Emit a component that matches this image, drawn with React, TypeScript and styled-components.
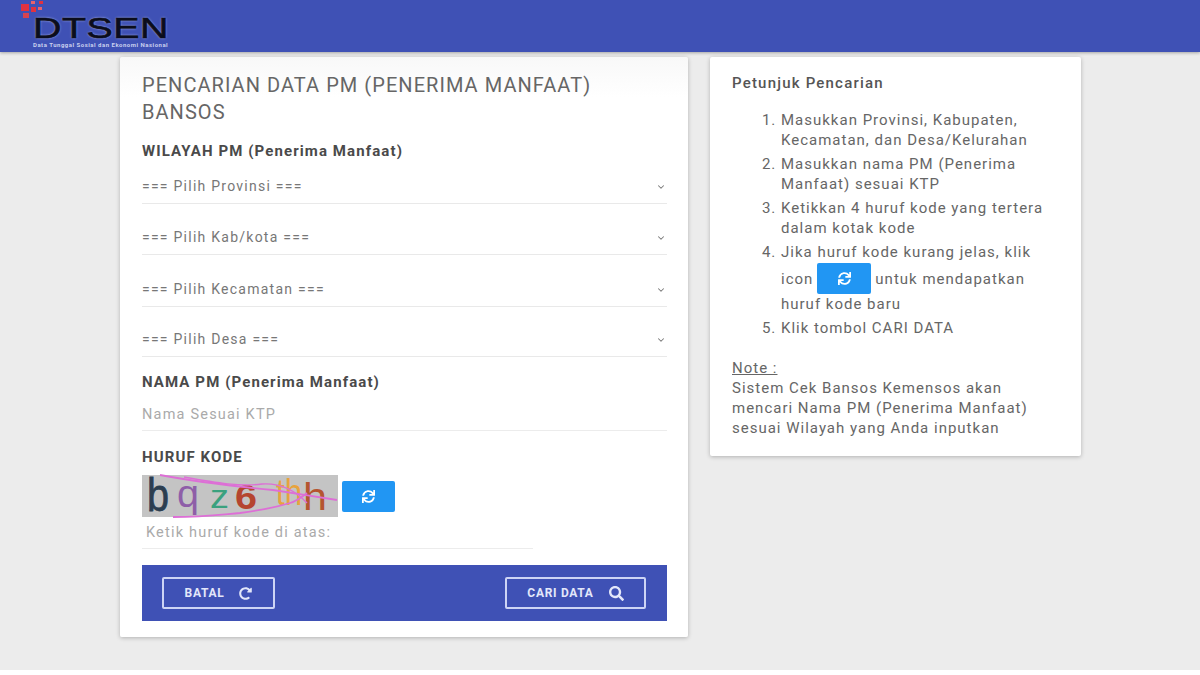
import styled, { createGlobalStyle } from "styled-components";
import { ChevronDown } from "lucide-react";
import { FaRedoAlt, FaSearch, FaSync } from "react-icons/fa";

const GlobalStyle = createGlobalStyle`
  html, body {
    margin: 0;
    background: #fff;
    font-family: Roboto, "Liberation Sans", sans-serif;
  }
`;

const Page = styled.div`
  width: 1200px;
  height: 670px;
  background: #ececec;
  overflow: hidden;
`;

const Header = styled.header`
  height: 52px;
  background: #3f51b5;
  box-shadow: 0 1px 3px rgba(0, 0, 0, 0.3);
  padding-left: 20px;
  box-sizing: border-box;
`;

const Logo = styled.div`
  position: relative;
  width: 150px;
  height: 52px;
`;

const LogoMark = styled.svg`
  position: absolute;
  left: 0;
  top: 0;
`;

const LogoName = styled.div`
  position: absolute;
  left: 13px;
  top: 16px;
  font-family: "Liberation Sans", sans-serif;
  font-size: 30px;
  line-height: 24px;
  letter-spacing: 0.4px;
  color: #0b0d1c;
  -webkit-text-stroke: 0.7px #0b0d1c;
  text-shadow: 0 0 2px #cfd6f5;
  transform: scaleX(1.31);
  transform-origin: left center;
`;

const LogoTagline = styled.div`
  position: absolute;
  left: 13px;
  top: 41px;
  font-size: 6px;
  line-height: 7px;
  font-weight: 700;
  letter-spacing: 0.5px;
  color: #c9d0ee;
  white-space: nowrap;
`;

const Content = styled.main`
  display: flex;
  align-items: flex-start;
  gap: 22px;
  padding: 5px 0 0 120px;
`;

const Card = styled.section`
  background: #fff;
  box-shadow: 0 1px 4px rgba(0, 0, 0, 0.25);
  border-radius: 2px;
  box-sizing: border-box;
`;

const FormCard = styled(Card)`
  width: 568px;
  height: 580px;
  padding: 15px 21px 0 22px;
  background: linear-gradient(#f8f8f8, #fff 40px);
`;

const HelpCard = styled(Card)`
  width: 371px;
  height: 399px;
  padding: 16px 22px 0;
  font-size: 15px;
  letter-spacing: 1px;
  color: #666;
`;

const Title = styled.h1`
  margin: 0 0 16px;
  font-size: 20px;
  line-height: 27px;
  font-weight: 400;
  letter-spacing: 1.05px;
  color: #666;
`;

const Label = styled.div<{ $bottom: number }>`
  font-size: 15px;
  line-height: 18px;
  font-weight: 700;
  letter-spacing: 1.1px;
  color: #4a4a4a;
  margin-bottom: ${(p) => p.$bottom}px;
`;

const SelectRow = styled.div<{ $height: number }>`
  height: ${(p) => p.$height}px;
  display: flex;
  align-items: flex-end;
  justify-content: space-between;
  border-bottom: 1px solid #e9e9e9;
  box-sizing: border-box;
  padding: 0 1px 8px 0;
  font-size: 14px;
  line-height: 18px;
  letter-spacing: 1.25px;
  color: #777;
`;

const SelectChevron = styled(ChevronDown)`
  color: #777;
  margin-bottom: 3px;
`;

const SelectList = styled.div`
  margin-bottom: 16px;
`;

const TextField = styled.div<{ $width?: number; $indent?: number; $bottom: number }>`
  width: ${(p) => (p.$width ? `${p.$width}px` : "auto")};
  height: 32px;
  padding-left: ${(p) => p.$indent ?? 0}px;
  margin-bottom: ${(p) => p.$bottom}px;
  display: flex;
  align-items: center;
  border-bottom: 1px solid #ececec;
  box-sizing: border-box;
  font-size: 14.5px;
  letter-spacing: 1.2px;
  color: #aaa;
`;

const CaptchaRow = styled.div`
  display: flex;
  align-items: center;
  gap: 4px;
`;

const Captcha = styled.svg`
  display: block;
  width: 196px;
  height: 42px;
  background: #c4c4c4;
  overflow: visible;
`;

const RefreshButton = styled.span<{ $width: number; $height: number }>`
  display: inline-flex;
  align-items: center;
  justify-content: center;
  flex-shrink: 0;
  width: ${(p) => p.$width}px;
  height: ${(p) => p.$height}px;
  background: #2196f3;
  border-radius: 2px;
  color: #fff;
`;

const ActionBar = styled.div`
  height: 56px;
  background: #3f51b5;
  display: flex;
  align-items: center;
  justify-content: space-between;
  padding: 0 21px 0 20px;
  box-sizing: border-box;
`;

const ActionButton = styled.button<{ $width: number }>`
  width: ${(p) => p.$width}px;
  height: 32px;
  padding: 0;
  display: flex;
  align-items: center;
  justify-content: center;
  gap: 15px;
  background: transparent;
  border: 2px solid #cdd4f5;
  border-radius: 2px;
  box-sizing: border-box;
  color: #e3e7fa;
  font-family: inherit;
  font-size: 12px;
  font-weight: 700;
  letter-spacing: 0.7px;
`;

const HelpTitle = styled.h2`
  margin: 0 0 17px;
  font-size: 15px;
  line-height: 20px;
  font-weight: 500;
  letter-spacing: 1.2px;
  color: #555;
`;

const Steps = styled.ol`
  margin: 0 0 20px;
  padding: 0 0 0 49px;
`;

const Step = styled.li`
  line-height: 20px;
  margin-bottom: 4px;
`;

const IconLine = styled.span`
  display: flex;
  align-items: center;
  gap: 4px;
  height: 31px;
  margin-top: 1px;
  white-space: nowrap;
`;

const NoteTitle = styled.div`
  line-height: 20px;
  text-decoration: underline;
`;

const NoteText = styled.p`
  margin: 0;
  line-height: 20px;
`;

const selects = [
  { text: "=== Pilih Provinsi ===", height: 44 },
  { text: "=== Pilih Kab/kota ===", height: 51 },
  { text: "=== Pilih Kecamatan ===", height: 52 },
  { text: "=== Pilih Desa ===", height: 50 },
];

function App() {
  return (
    <>
      <GlobalStyle />
      <Page>
        <Header>
          <Logo>
            <LogoMark width="32" height="24" viewBox="0 0 32 24">
              <rect x="1" y="4" width="8" height="7" fill="#e0323f" />
              <rect x="3" y="13" width="6" height="5" fill="#d8434f" />
              <rect x="11" y="7" width="5" height="5" fill="#e0323f" />
              <rect x="11" y="1" width="4" height="3" fill="#e8626c" />
              <rect x="19" y="1" width="4" height="3" fill="#e0323f" />
              <rect x="18" y="7" width="4" height="3" fill="#e8626c" />
            </LogoMark>
            <LogoName>DTSEN</LogoName>
            <LogoTagline>Data Tunggal Sosial dan Ekonomi Nasional</LogoTagline>
          </Logo>
        </Header>
        <Content>
          <FormCard>
            <Title>
              PENCARIAN DATA PM (PENERIMA MANFAAT)
              <br />
              BANSOS
            </Title>
            <Label $bottom={0}>WILAYAH PM (Penerima Manfaat)</Label>
            <SelectList>
              {selects.map((s) => (
                <SelectRow key={s.text} $height={s.height}>
                  {s.text}
                  <SelectChevron size={10} strokeWidth={2.5} />
                </SelectRow>
              ))}
            </SelectList>
            <Label $bottom={8}>NAMA PM (Penerima Manfaat)</Label>
            <TextField $bottom={17}>Nama Sesuai KTP</TextField>
            <Label $bottom={9}>HURUF KODE</Label>
            <CaptchaRow>
              <Captcha viewBox="0 0 196 42">
                <text x="5" y="36" fontFamily="Liberation Sans" fontSize="46" textLength="22" lengthAdjust="spacingAndGlyphs" fill="#2c3e50" stroke="#2c3e50" strokeWidth="0.8">b</text>
                <text x="35" y="32" fontFamily="Liberation Sans" fontSize="38" textLength="22" lengthAdjust="spacingAndGlyphs" fill="#8e5ea8">q</text>
                <text x="68" y="33" fontFamily="Liberation Sans" fontSize="34" textLength="19" lengthAdjust="spacingAndGlyphs" fill="#3aa17e">z</text>
                <text x="93" y="34" fontFamily="Liberation Sans" fontSize="35" fontWeight="700" textLength="22" lengthAdjust="spacingAndGlyphs" fill="#b5452f">6</text>
                <text x="134" y="30" fontFamily="Liberation Sans" fontSize="36" textLength="26" lengthAdjust="spacingAndGlyphs" fill="#e8a33d">th</text>
                <text x="161" y="35" fontFamily="Liberation Sans" fontSize="38" textLength="24" lengthAdjust="spacingAndGlyphs" fill="#b5552f">h</text>
                <path d="M18 0 C60 8 100 12 131 15 C150 18 175 22 195 25" stroke="#dd6fd6" strokeWidth="1.8" fill="none" />
                <path d="M42 2 C75 8 100 12 120 9 C135 8 150 12 165 28" stroke="#dd6fd6" strokeWidth="1.4" fill="none" />
                <path d="M31 42 C60 42 75 40 98 38 C120 35 135 32 148 28 C155 26 160 22 165 18" stroke="#dd6fd6" strokeWidth="1.8" fill="none" />
              </Captcha>
              <RefreshButton $width={53} $height={31}>
                <FaSync size={13} />
              </RefreshButton>
            </CaptchaRow>
            <TextField $width={391} $indent={4} $bottom={16}>
              Ketik huruf kode di atas:
            </TextField>
            <ActionBar>
              <ActionButton $width={113}>
                BATAL
                <FaRedoAlt size={13} />
              </ActionButton>
              <ActionButton $width={141}>
                CARI DATA
                <FaSearch size={15} />
              </ActionButton>
            </ActionBar>
          </FormCard>
          <HelpCard>
            <HelpTitle>Petunjuk Pencarian</HelpTitle>
            <Steps>
              <Step>Masukkan Provinsi, Kabupaten, Kecamatan, dan Desa/Kelurahan</Step>
              <Step>Masukkan nama PM (Penerima Manfaat) sesuai KTP</Step>
              <Step>Ketikkan 4 huruf kode yang tertera dalam kotak kode</Step>
              <Step>
                Jika huruf kode kurang jelas, klik
                <IconLine>
                  icon
                  <RefreshButton $width={54} $height={31}>
                    <FaSync size={13} />
                  </RefreshButton>
                  untuk mendapatkan
                </IconLine>
                huruf kode baru
              </Step>
              <Step>Klik tombol CARI DATA</Step>
            </Steps>
            <NoteTitle>Note :</NoteTitle>
            <NoteText>
              Sistem Cek Bansos Kemensos akan mencari Nama PM (Penerima Manfaat) sesuai Wilayah yang Anda inputkan
            </NoteText>
          </HelpCard>
        </Content>
      </Page>
    </>
  );
}

export default App;
